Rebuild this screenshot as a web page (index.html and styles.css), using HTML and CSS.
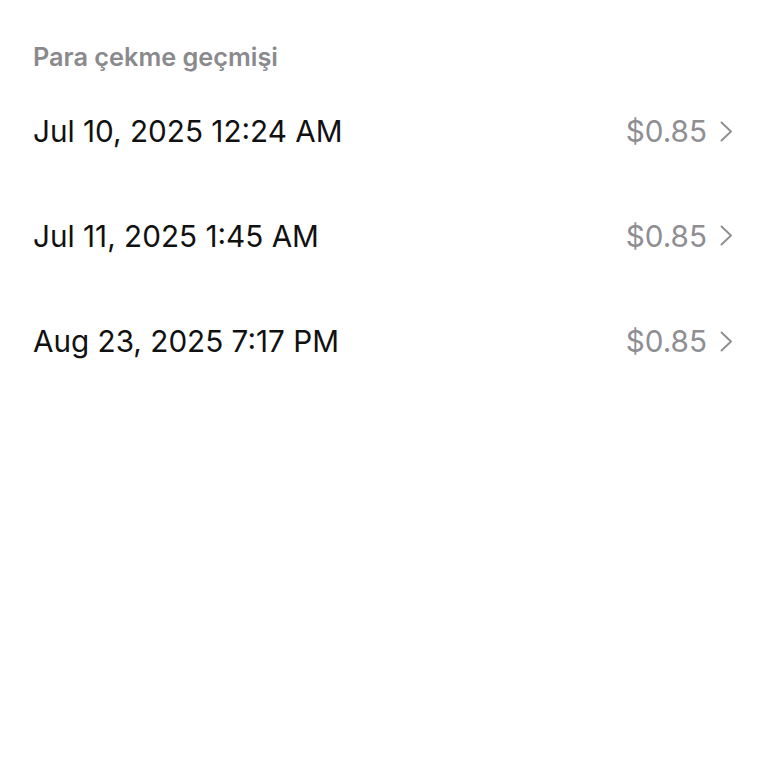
FILE: index.html
```html
<!DOCTYPE html>
<html>
<head>
<meta charset="utf-8">
<link rel="stylesheet" href="styles.css">
</head>
<body>
<div class="page">
  <h2 class="title">Para çekme geçmişi</h2>
  <ul class="list">
    <li class="row"><span class="date">Jul 10, 2025 12:24 AM</span><span class="amount">$0.85<svg class="chev" viewBox="0 0 13 21" width="13" height="21"><path d="M1.5 1.5L11 10.5L1.5 19.5" fill="none" stroke="#8e8e93" stroke-width="1.9" stroke-linecap="round" stroke-linejoin="round"/></svg></span></li>
    <li class="row"><span class="date">Jul 11, 2025 1:45 AM</span><span class="amount">$0.85<svg class="chev" viewBox="0 0 13 21" width="13" height="21"><path d="M1.5 1.5L11 10.5L1.5 19.5" fill="none" stroke="#8e8e93" stroke-width="1.9" stroke-linecap="round" stroke-linejoin="round"/></svg></span></li>
    <li class="row"><span class="date">Aug 23, 2025 7:17 PM</span><span class="amount">$0.85<svg class="chev" viewBox="0 0 13 21" width="13" height="21"><path d="M1.5 1.5L11 10.5L1.5 19.5" fill="none" stroke="#8e8e93" stroke-width="1.9" stroke-linecap="round" stroke-linejoin="round"/></svg></span></li>
  </ul>
</div>
</body>
</html>
```
FILE: styles.css
```css
html, body {
  margin: 0;
  padding: 0;
  background: #ffffff;
}
.page {
  padding: 40px 35px 0 33px;
  font-family: Inter, "Noto Sans", sans-serif;
}
.title {
  margin: 0;
  font-size: 25.3px;
  font-weight: 600;
  color: #8a8a8e;
  line-height: 34px;
}
.list {
  list-style: none;
  margin: 0;
  padding: 0;
  margin-top: 37px;
}
.row {
  display: flex;
  justify-content: space-between;
  align-items: center;
  height: 105.5px;
}
.row:first-child {
  height: 72px;
  align-items: flex-start;
}
.date {
  font-size: 29.7px;
  color: #111111;
  line-height: 40px;
}
.amount {
  display: flex;
  align-items: center;
  gap: 13px;
  font-size: 29.7px;
  color: #8e8e93;
  line-height: 40px;
}
.chev {
  display: block;
}
```
